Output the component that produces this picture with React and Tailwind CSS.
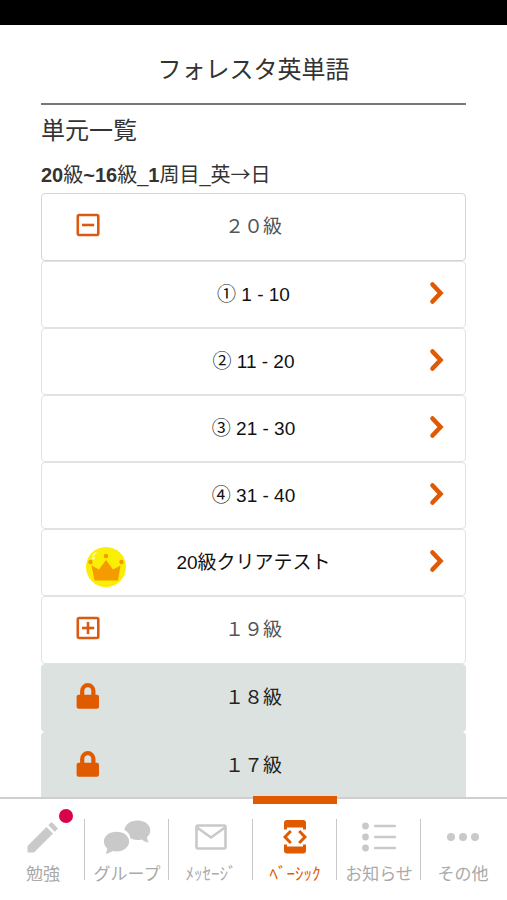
import React from "react";

function Chevron() {
  return (
    <svg className="h-6 w-4" viewBox="0 0 16 24" fill="none" stroke="#e05a05" strokeWidth="4.600" aria-hidden="true">
      <path d="M3.500 3.500 L11.500 12 L3.500 20.500" strokeLinecap="round" strokeLinejoin="miter" />
    </svg>
  );
}

function ToggleIcon({ open }) {
  return (
    <svg className="h-6 w-6" viewBox="0 0 24 24" fill="none" stroke="#d95a10" strokeWidth="2.600" aria-hidden="true">
      <rect x="1.800" y="2" width="20.500" height="20" rx="1.500" />
      <path d="M6 12H18.200" />
      {!open && <path d="M12 5.900V18.100" />}
    </svg>
  );
}

function LockIcon() {
  return (
    <svg className="h-7 w-6" viewBox="0 0 24 28" aria-hidden="true">
      <path d="M6.200 14V9a5.600 5.900 0 0 1 11.200 0V14" fill="none" stroke="#e05a00" strokeWidth="4.200" />
      <rect x="0.600" y="12.800" width="22.400" height="14" rx="2" fill="#e05a00" />
    </svg>
  );
}

function CrownIcon() {
  return (
    <svg className="h-10 w-10" viewBox="0 0 40 40" aria-hidden="true">
      <circle cx="20" cy="20" r="20" fill="#fbee05" />
      <path d="M6 9.500q1-4 5-4.500q-2 3-5 4.500z" fill="#fffde0" />
      <circle cx="7.500" cy="11" r="1.500" fill="#fffbb0" />
      <path d="M5.500 18.500L13 22.500L20 13L27 22.500L34.500 18.500L32 33.500H8.500Z" fill="#f59a00" />
      <circle cx="4.500" cy="15" r="2.200" fill="#f59a00" />
      <circle cx="20" cy="9" r="2.200" fill="#f59a00" />
      <circle cx="35.500" cy="15" r="2.200" fill="#f59a00" />
    </svg>
  );
}

function PencilIcon() {
  return (
    <svg className="h-9 w-9" viewBox="0 0 36 36" fill="#c9c9c9" aria-hidden="true">
      <path d="M2.500 27L21.500 8L28 14.500L9 33.500H2.500Z" />
      <path d="M23.300 6.200L26.500 3L33 9.500L29.800 12.700Z" />
    </svg>
  );
}

function ChatIcon() {
  return (
    <svg className="h-9 w-12" viewBox="0 0 48 36" fill="#c9c9c9" aria-hidden="true">
      <path d="M34.500 1.500c7.200 0 12.800 4.200 12.800 9.800c0 2.800-1.300 5.300-3.400 7c.2 1.800.8 3.200 1.800 5.400c-3-.7-5.200-1.700-6.800-3.200c-4.500 1-8.400.5-11.400-.9c-.3-4-2.600-6.800-6-8.500c.4-5.500 5.600-9.600 13-9.600z" />
      <path d="M13.500 12.700c7.200 0 12.600 4.200 12.600 9.800s-5.400 9.900-12.600 9.900c-1.500 0-2.800-.2-4-.5c-1.700 1.500-3.800 2.300-7 2.900c1.100-2 1.700-3.400 1.800-5.200C2.200 27.800.9 25.300.9 22.500c0-5.600 5.600-9.800 12.600-9.800z" />
    </svg>
  );
}

function MailIcon() {
  return (
    <svg className="h-7 w-8" viewBox="0 0 32 28" fill="none" stroke="#c9c9c9" strokeWidth="2.600" strokeLinejoin="round" aria-hidden="true">
      <rect x="1.500" y="2.500" width="29" height="23" rx="1.500" />
      <path d="M2 4.500L16 14.500L30 4.500" />
    </svg>
  );
}

function BasicIcon() {
  return (
    <svg className="h-9 w-6" viewBox="0 0 24 36" fill="none" stroke="#e05a00" aria-hidden="true">
      <path d="M1 10.500V4Q1 1 4 1H20Q23 1 23 4V10.500H20V8.500H4V10.500Z" fill="#e05a00" stroke="none" />
      <path d="M1 25.500V31.500Q1 34.500 4 34.500H20Q23 34.500 23 31.500V25.500H20V27.500H4V25.500Z" fill="#e05a00" stroke="none" />
      <path d="M7.800 12L2 18L7.800 24M16.200 12L22 18L16.200 24" strokeWidth="3" />
    </svg>
  );
}

function ListIcon() {
  return (
    <svg className="h-8 w-9" viewBox="0 0 36 32" fill="#c9c9c9" aria-hidden="true">
      {[5, 16, 27].map((y) => (
        <g key={y}>
          <circle cx="4.500" cy={y} r="3.400" />
          <rect x="13" y={y - 1.3} width="22" height="2.600" rx="1" />
        </g>
      ))}
    </svg>
  );
}

function DotsIcon() {
  return (
    <svg className="h-8 w-8" viewBox="0 0 32 32" fill="#c9c9c9" aria-hidden="true">
      <circle cx="4" cy="16" r="4" />
      <circle cx="16" cy="16" r="4" />
      <circle cx="28" cy="16" r="4" />
    </svg>
  );
}

const rowGrid =
  "grid w-full grid-cols-[76px_1fr_76px] items-center rounded border text-[19px] leading-6";

function GroupRow({ label, state }) {
  const locked = state === "locked";
  return (
    <button
      type="button"
      disabled={locked}
      aria-expanded={locked ? undefined : state === "open"}
      className={
        rowGrid +
        " h-[68px] " +
        (locked
          ? "border-[#dce2e0] bg-[#dce2e0] text-[#222]"
          : state === "open"
            ? "border-[#d4d4d4] bg-white text-[#555]"
            : "border-[#e2e2e2] bg-white text-[#555]")
      }
    >
      <span className="flex justify-end pr-[18px] pb-1">
        {locked ? <LockIcon /> : <ToggleIcon open={state === "open"} />}
      </span>
      <span>{label}</span>
    </button>
  );
}

function UnitRow({ label, crown }) {
  return (
    <a href="#unit" className={rowGrid + " h-[67px] border-[#e2e2e2] bg-white text-[#111]"}>
      <span className="flex justify-end pt-2">
        {crown && <span className="-mr-2"><CrownIcon /></span>}
      </span>
      <span className="text-center">{label}</span>
      <span className="flex justify-end pr-5 pb-1">
        <Chevron />
      </span>
    </a>
  );
}

const tabs = [
  { label: "勉強", icon: <PencilIcon />, badge: true },
  { label: "グループ", icon: <ChatIcon /> },
  { label: "ﾒｯｾｰｼﾞ", icon: <MailIcon /> },
  { label: "ﾍﾞｰｼｯｸ", icon: <BasicIcon />, active: true },
  { label: "お知らせ", icon: <ListIcon /> },
  { label: "その他", icon: <DotsIcon /> },
];

export default function App() {
  return (
    <div className="flex h-screen flex-col bg-white font-['Liberation_Sans','Noto_Sans_CJK_JP',sans-serif] text-[#333]">
      <div className="h-[25px] shrink-0 bg-black" />
      <main className="min-h-0 flex-1 overflow-hidden px-[41px]">
        <h1 className="flex h-20 items-center justify-center border-b-2 border-[#777] pt-3 text-2xl">
          フォレスタ英単語
        </h1>
        <h2 className="mt-2 text-2xl leading-9">単元一覧</h2>
        <h3 className="mt-3 pb-1 text-xl leading-7 whitespace-nowrap">
          <b>20</b>級<b>~16</b>級_<b>1</b>周目_英
          <span className="font-['Noto_Sans_CJK_JP',sans-serif] leading-none">→</span>日
        </h3>
        <div>
          <GroupRow label="２０級" state="open" />
          <UnitRow label="① 1 - 10" />
          <UnitRow label="② 11 - 20" />
          <UnitRow label="③ 21 - 30" />
          <UnitRow label="④ 31 - 40" />
          <UnitRow label="20級クリアテスト" crown />
          <GroupRow label="１９級" state="closed" />
          <GroupRow label="１８級" state="locked" />
          <GroupRow label="１７級" state="locked" />
        </div>
      </main>
      <nav className="grid h-[103px] shrink-0 grid-cols-6 border-t-2 border-[#cfcfcf] bg-white pr-0.5 pl-px">
        {tabs.map((t) => (
          <button
            key={t.label}
            type="button"
            className={
              "relative flex flex-col items-center pt-5 text-[17px] leading-6 whitespace-nowrap " +
              (t.active ? "text-[#e05a00]" : "text-[#aaa]")
            }
          >
            {t.active && <span className="absolute inset-x-0 -top-[3px] h-2 bg-[#e05a00]" />}
            <span className="relative flex h-9 items-center">
              {t.icon}
              {t.badge && (
                <span className="absolute -top-[10px] -right-3 h-[14px] w-[14px] rounded-full bg-[#d9004c]" />
              )}
            </span>
            <span className="mt-2">{t.label}</span>
            {t.label !== "その他" && (
              <span className="absolute top-5 right-0 h-[61px] w-px bg-[#c8c8c8]" />
            )}
          </button>
        ))}
      </nav>
    </div>
  );
}
